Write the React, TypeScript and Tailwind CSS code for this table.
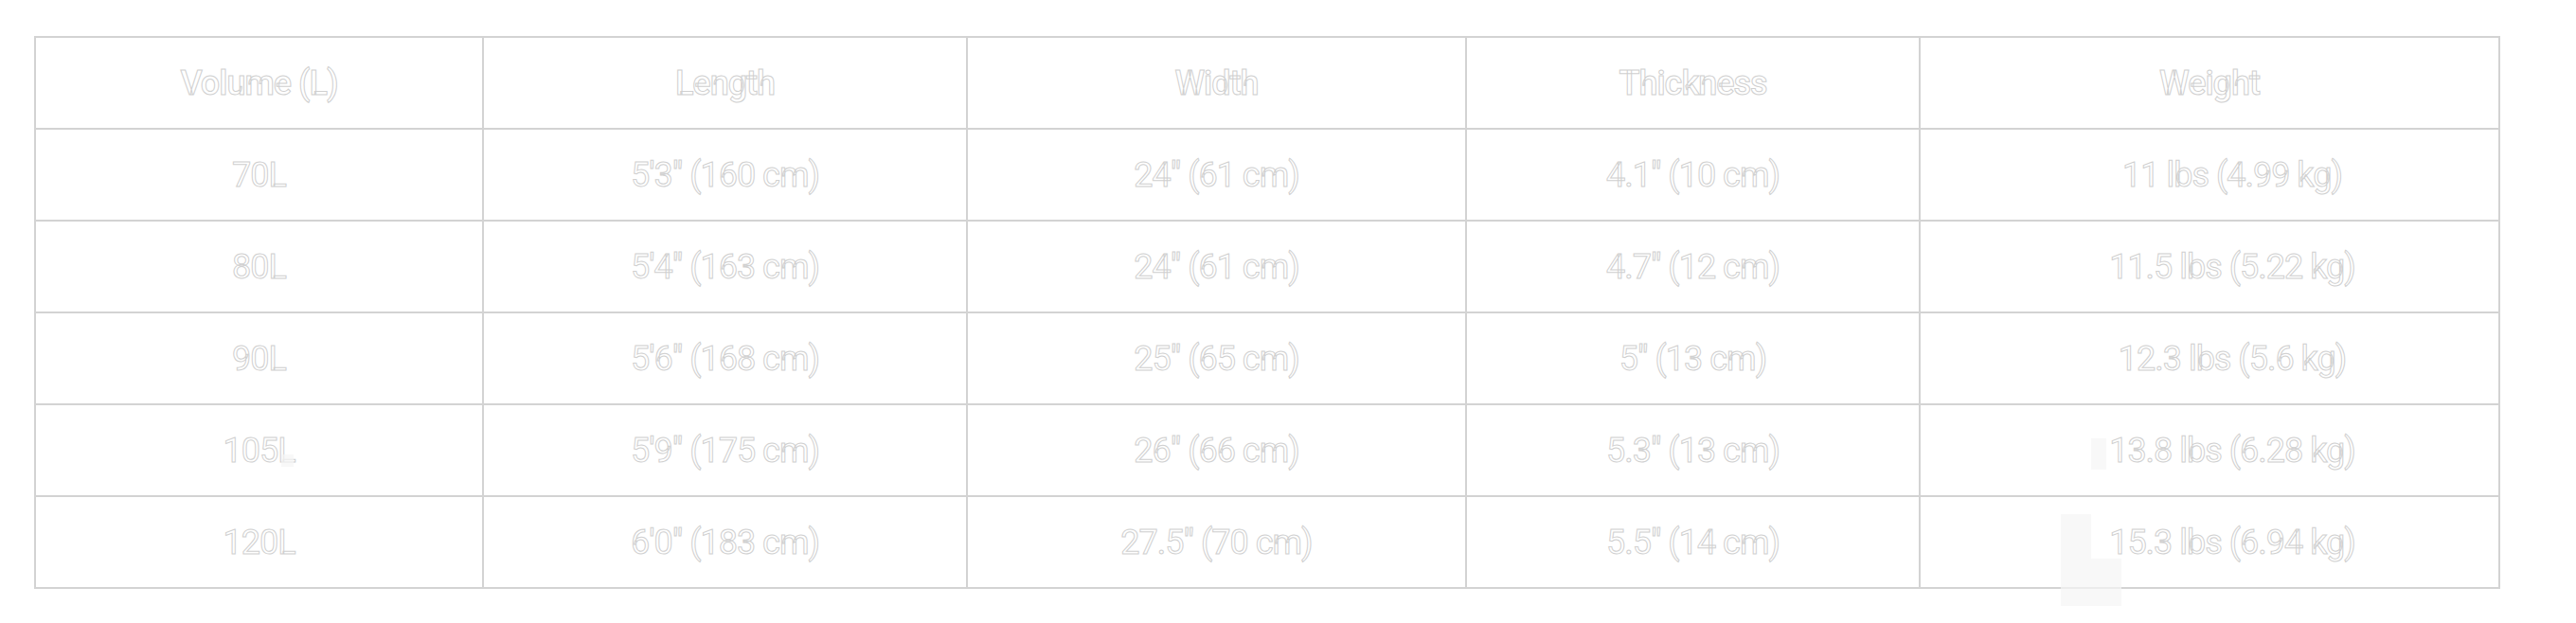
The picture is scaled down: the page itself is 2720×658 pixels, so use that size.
const headers = ['Volume (L)', 'Length', 'Width', 'Thickness', 'Weight']

const rows = [
  ['70L', '5\'3" (160 cm)', '24" (61 cm)', '4.1" (10 cm)', '11 lbs (4.99 kg)'],
  ['80L', '5\'4" (163 cm)', '24" (61 cm)', '4.7" (12 cm)', '11.5 lbs (5.22 kg)'],
  ['90L', '5\'6" (168 cm)', '25" (65 cm)', '5" (13 cm)', '12.3 lbs (5.6 kg)'],
  ['105L', '5\'9" (175 cm)', '26" (66 cm)', '5.3" (13 cm)', '13.8 lbs (6.28 kg)'],
  ['120L', '6\'0" (183 cm)', '27.5" (70 cm)', '5.5" (14 cm)', '15.3 lbs (6.94 kg)'],
]

const colWidths = ['w-[473px]', 'w-[511px]', 'w-[527px]', 'w-[479px]', 'w-[612px]']

const outlined =
  "text-white text-[36px] leading-none tracking-[-1px] font-['Roboto',sans-serif] [-webkit-text-stroke:1px_#d0d0d0]"

export default function App() {
  return (
    <div className="relative min-h-[658px] w-full bg-white pt-[38px] px-[36px]">
      <table className="w-[2602px] table-fixed border-collapse border-2 border-[#d3d3d3]">
        <colgroup>
          {colWidths.map((w, i) => (
            <col key={i} className={w} />
          ))}
        </colgroup>
        <thead>
          <tr className="h-[97px]">
            {headers.map((h) => (
              <th key={h} className={`border-2 border-[#d3d3d3] text-center font-medium ${outlined}`}>
                {h}
              </th>
            ))}
          </tr>
        </thead>
        <tbody>
          {rows.map((row) => (
            <tr key={row[0]} className="h-[97px]">
              {row.map((cell, i) => (
                <td
                  key={i}
                  className={`border-2 border-[#d3d3d3] text-center font-normal ${i === 4 ? 'pl-[48px]' : ''} ${outlined}`}
                >
                  {cell}
                </td>
              ))}
            </tr>
          ))}
        </tbody>
      </table>

      {/* faint overlay blocks */}
      <div className="absolute left-[297px] top-[480px] h-[13px] w-[13px] bg-[#f5f5f5]/70" />
      <div className="absolute left-[2208px] top-[463px] h-[33px] w-[16px] bg-[#f5f5f5]/70" />
      <div className="absolute left-[2176px] top-[543px] h-[47px] w-[32px] bg-[#f5f5f5]/70" />
      <div className="absolute left-[2176px] top-[590px] h-[50px] w-[64px] bg-[#f5f5f5]/70" />
    </div>
  )
}
